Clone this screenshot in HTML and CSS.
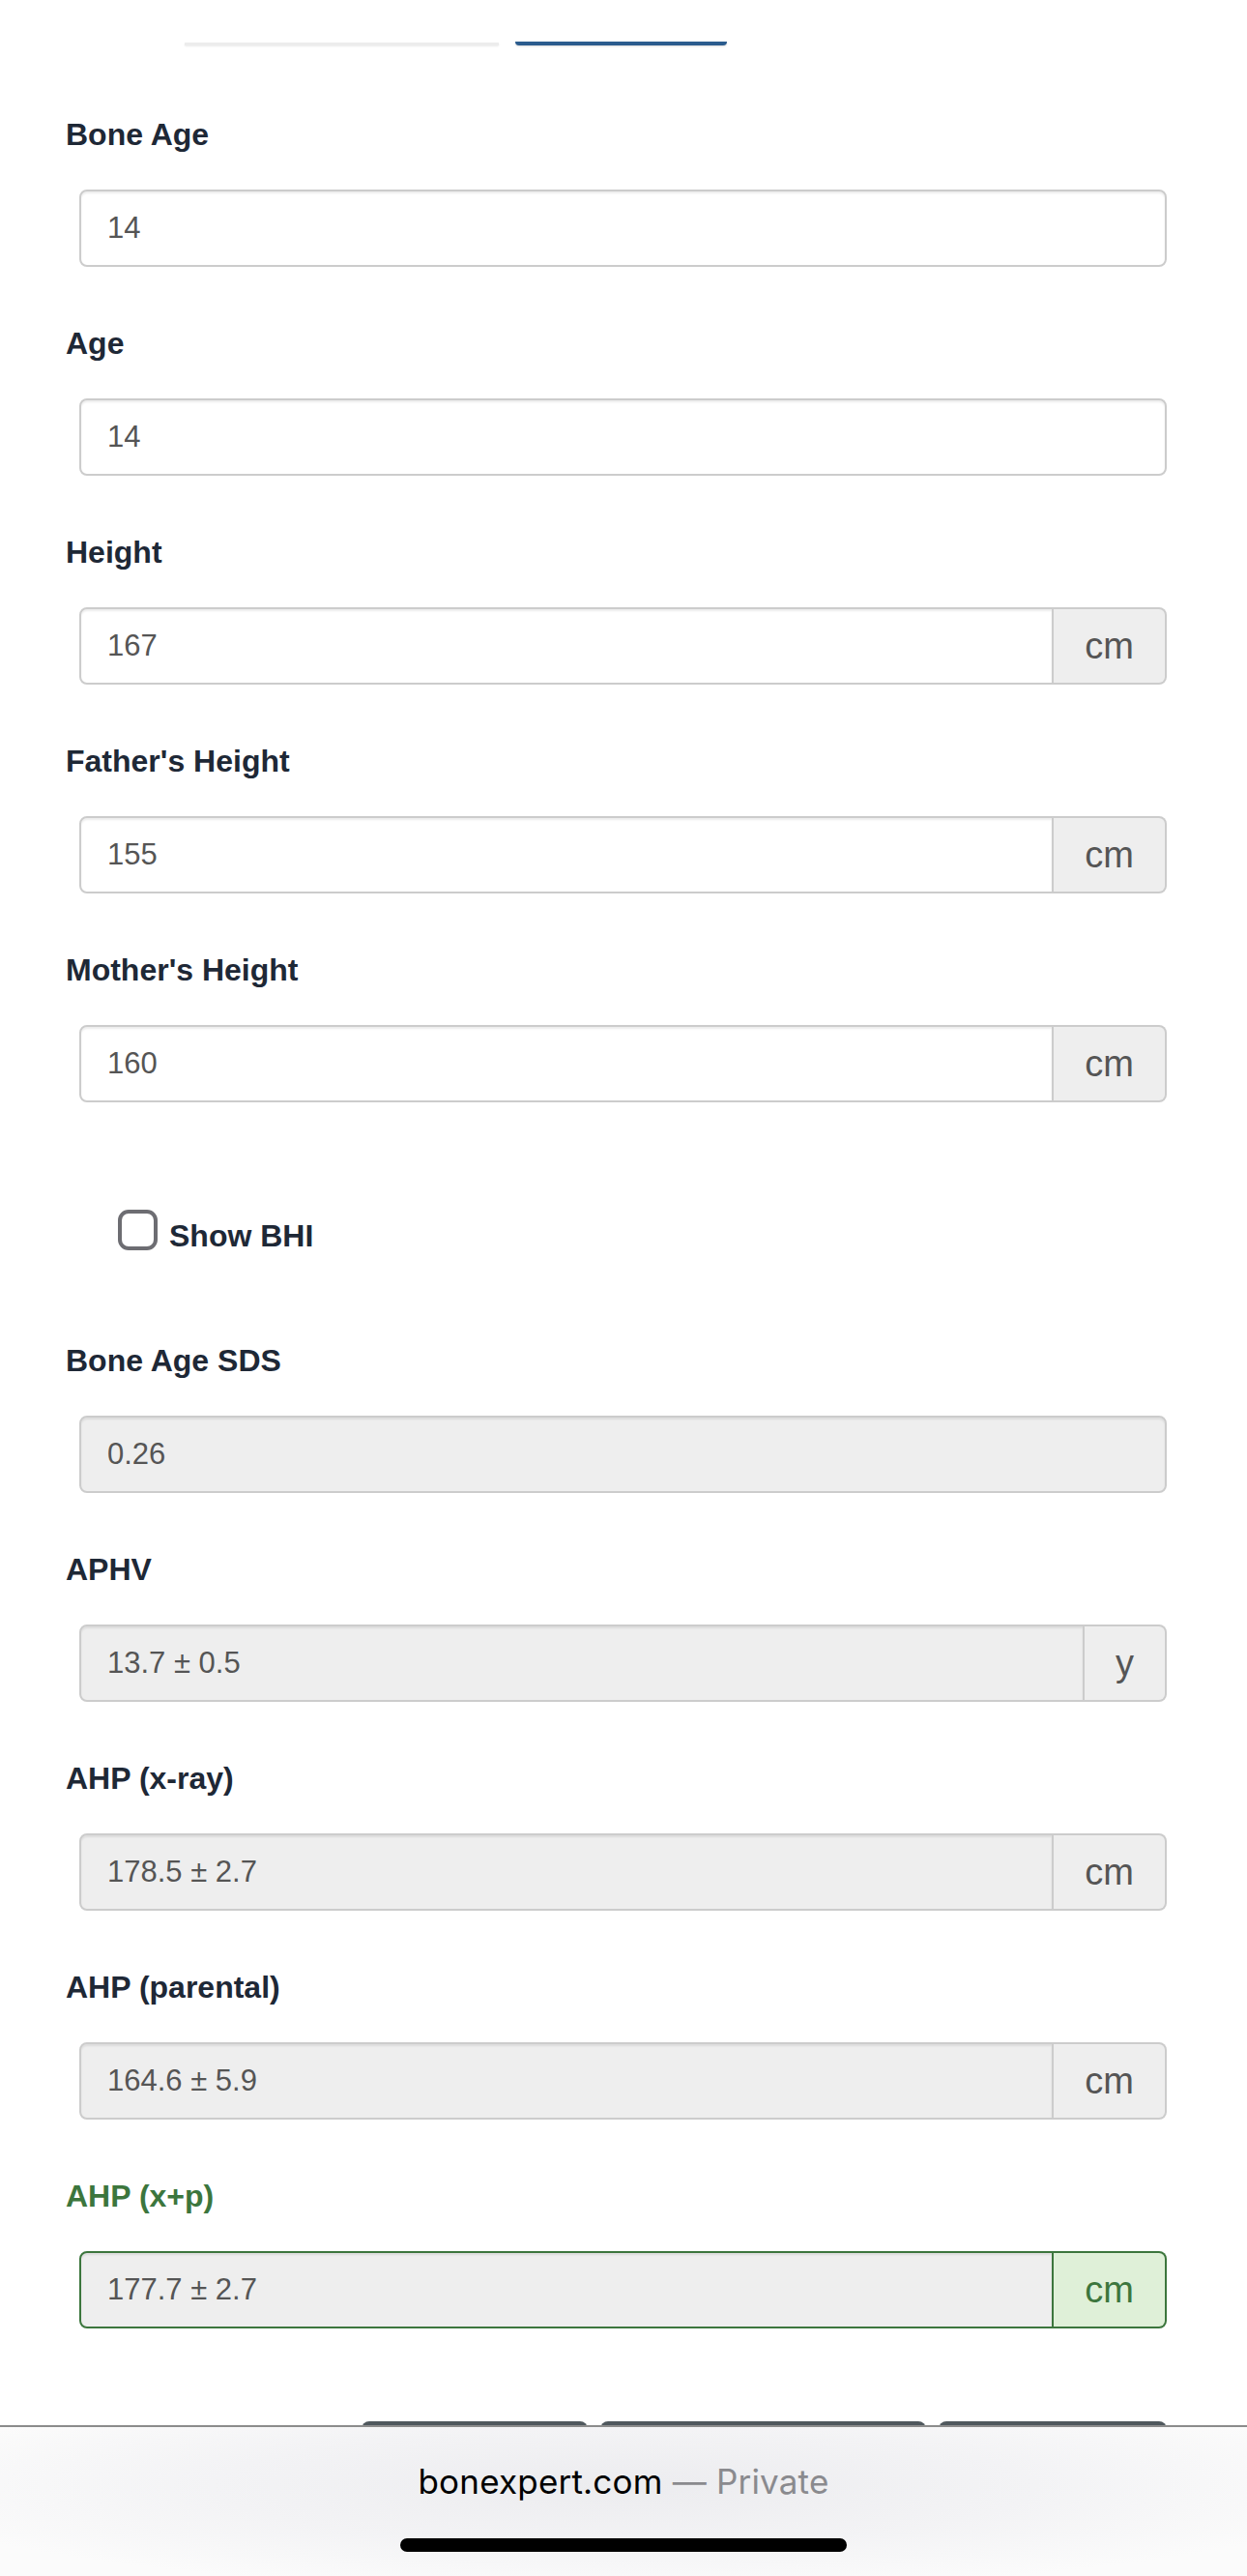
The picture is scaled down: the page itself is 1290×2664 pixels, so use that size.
FILE: index.html
```html
<!DOCTYPE html>
<html lang="en">
<head>
<meta charset="utf-8">
<title>BoneXpert</title>
<link rel="stylesheet" href="styles.css">
</head>
<body>
<div class="top-tabs">
  <span class="tab tab-gray"></span>
  <span class="tab tab-blue"></span>
</div>

<main class="form">
  <div class="group">
    <label class="label">Bone Age</label>
    <div class="field">
      <input class="control" type="text" value="14">
    </div>
  </div>

  <div class="group">
    <label class="label">Age</label>
    <div class="field">
      <input class="control" type="text" value="14">
    </div>
  </div>

  <div class="group">
    <label class="label">Height</label>
    <div class="field">
      <input class="control with-addon" type="text" value="167">
      <span class="addon">cm</span>
    </div>
  </div>

  <div class="group">
    <label class="label">Father's Height</label>
    <div class="field">
      <input class="control with-addon" type="text" value="155">
      <span class="addon">cm</span>
    </div>
  </div>

  <div class="group">
    <label class="label">Mother's Height</label>
    <div class="field">
      <input class="control with-addon" type="text" value="160">
      <span class="addon">cm</span>
    </div>
  </div>

  <div class="check-row">
    <input class="chk" type="checkbox" id="bhi">
    <label class="chk-label" for="bhi">Show BHI</label>
  </div>

  <div class="group">
    <label class="label">Bone Age SDS</label>
    <div class="field">
      <input class="control readonly" type="text" value="0.26" readonly>
    </div>
  </div>

  <div class="group">
    <label class="label">APHV</label>
    <div class="field">
      <input class="control readonly with-addon" type="text" value="13.7 ± 0.5" readonly>
      <span class="addon">y</span>
    </div>
  </div>

  <div class="group">
    <label class="label">AHP (x-ray)</label>
    <div class="field">
      <input class="control readonly with-addon" type="text" value="178.5 ± 2.7" readonly>
      <span class="addon">cm</span>
    </div>
  </div>

  <div class="group">
    <label class="label">AHP (parental)</label>
    <div class="field">
      <input class="control readonly with-addon" type="text" value="164.6 ± 5.9" readonly>
      <span class="addon">cm</span>
    </div>
  </div>

  <div class="group success">
    <label class="label">AHP (x+p)</label>
    <div class="field">
      <input class="control readonly with-addon" type="text" value="177.7 ± 2.7" readonly>
      <span class="addon">cm</span>
    </div>
  </div>
</main>

<div class="actions">
  <span class="btn btn-a"></span>
  <span class="btn btn-b"></span>
  <span class="btn btn-c"></span>
</div>

<div class="safari-bar">
  <div class="url"><span class="host">bonexpert.com</span> <span class="private">— Private</span></div>
  <div class="home-indicator"></div>
</div>
</body>
</html>
```

FILE: styles.css
```css
html, body {
  margin: 0;
  padding: 0;
  background: #ffffff;
}

body {
  width: 1290px;
  height: 2664px;
  overflow: hidden;
  font-family: "Liberation Sans", Arial, Helvetica, sans-serif;
  position: relative;
}

/* partial tabs scrolled above the viewport */
.top-tabs {
  display: flex;
  align-items: flex-start;
  gap: 17px;
  padding: 43px 0 0 191px;
  height: 4px;
}

.tab {
  display: block;
}

.tab-gray {
  width: 325px;
  height: 3px;
  margin-top: 1px;
  background: #ececec;
  box-shadow: 0 1px 2px rgba(0, 0, 0, 0.08);
}

.tab-blue {
  width: 219px;
  height: 4px;
  background: #2b5c8e;
  border-radius: 0 0 4px 4px;
  box-shadow: 0 1px 2px rgba(0, 0, 0, 0.15);
}

.form {
  margin-top: 70px;
  padding: 0 83px 0 68px;
}

.group {
  margin-bottom: 57px;
}

.label {
  display: block;
  font-size: 32px;
  line-height: 44px;
  font-weight: 700;
  color: #1e2836;
  margin-bottom: 35px;
}

.field {
  display: flex;
  height: 80px;
  margin-left: 14px;
}

.control {
  flex: 1;
  min-width: 0;
  height: 80px;
  box-sizing: border-box;
  margin: 0;
  padding: 0 27px;
  border: 2px solid #cccccc;
  border-radius: 8px;
  background: #ffffff;
  color: #555555;
  font-family: "Liberation Sans", Arial, Helvetica, sans-serif;
  font-size: 31px;
  box-shadow: inset 0 2px 2px rgba(0, 0, 0, 0.075);
  outline: none;
}

.control.with-addon {
  border-radius: 8px 0 0 8px;
}

.control.readonly {
  background: #eeeeee;
}

.addon {
  display: flex;
  align-items: center;
  justify-content: center;
  box-sizing: border-box;
  height: 80px;
  padding: 0 32px;
  border: 2px solid #cccccc;
  border-left: 0;
  border-radius: 0 8px 8px 0;
  background: #eeeeee;
  color: #555555;
  font-size: 38px;
}

/* success state */
.success .label {
  color: #3c763d;
}

.success .control {
  border-color: #3c763d;
}

.success .addon {
  border-color: #3c763d;
  background: #dff0d8;
  color: #3c763d;
}

/* checkbox */
.check-row {
  display: flex;
  align-items: flex-start;
  gap: 12px;
  margin-left: 54px;
  padding-top: 54px;
  height: 42px;
  margin-bottom: 92px;
}

.chk {
  appearance: none;
  -webkit-appearance: none;
  margin: 0;
  width: 41px;
  height: 42px;
  box-sizing: border-box;
  border: 4px solid #6d6d72;
  border-radius: 11px;
  background: #ffffff;
}

.chk-label {
  font-size: 32px;
  line-height: 42px;
  font-weight: 700;
  color: #1e2836;
  padding-top: 6px;
}

/* buttons peeking below */
.actions {
  display: flex;
  justify-content: flex-end;
  gap: 13px;
  margin-top: 96px;
  padding-right: 83px;
}

.btn {
  display: block;
  height: 60px;
  background: #4f585d;
  border-radius: 8px;
}

.btn-a { width: 234px; }
.btn-b { width: 337px; }
.btn-c { width: 236px; }

/* Safari bottom bar */
.safari-bar {
  position: absolute;
  left: 0;
  right: 0;
  bottom: 0;
  height: 156px;
  box-sizing: border-box;
  border-top: 2px solid #8c8c8c;
  background: radial-gradient(ellipse 60% 70% at 50% 40%, #ececef 0%, #f3f3f5 55%, #fbfbfb 100%);
  padding-top: 35px;
  text-align: center;
}

.url {
  font-family: Inter, "Liberation Sans", sans-serif;
  font-size: 35px;
  line-height: 42px;
  letter-spacing: 0.2px;
}

.host {
  color: #000000;
}

.private {
  color: #8a8a8e;
}

.home-indicator {
  width: 462px;
  height: 14px;
  margin: 38px auto 0;
  background: #000000;
  border-radius: 7px;
}
```
